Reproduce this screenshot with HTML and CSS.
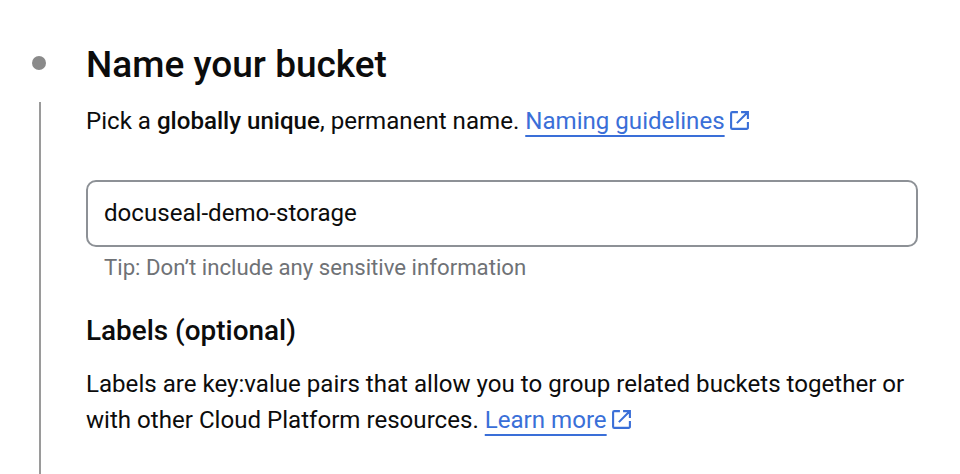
FILE: index.html
```html
<!DOCTYPE html>
<html lang="en">
<head>
    <meta charset="UTF-8">
    <title>Name your bucket</title>
    <link rel="stylesheet" href="styles.css">
</head>
<body>
    <div class="step">
        <div class="rail">
            <div class="rail-dot"></div>
            <div class="rail-line"></div>
        </div>
        <div class="step-content">
            <h1 class="step-title">Name your bucket</h1>
            <p class="intro">Pick a <strong>globally unique</strong>, permanent name. <a class="link" href="#">Naming guidelines</a><svg class="ext-icon" viewBox="0 0 20 20"><path d="M8.5 2H3.2A1.2 1.2 0 0 0 2 3.2v13.6A1.2 1.2 0 0 0 3.2 18h13.6a1.2 1.2 0 0 0 1.2-1.2v-5.3M7.5 12.5 18 2M11.5 2H18v6.5"/></svg></p>
            <div class="field">docuseal-demo-storage</div>
            <div class="hint">Tip: Don’t include any sensitive information</div>
            <h2 class="section-title">Labels (optional)</h2>
            <p class="body-text">Labels are key:value pairs that allow you to group related buckets together or with other Cloud Platform resources. <a class="link" href="#">Learn more</a><svg class="ext-icon" viewBox="0 0 20 20"><path d="M8.5 2H3.2A1.2 1.2 0 0 0 2 3.2v13.6A1.2 1.2 0 0 0 3.2 18h13.6a1.2 1.2 0 0 0 1.2-1.2v-5.3M7.5 12.5 18 2M11.5 2H18v6.5"/></svg></p>
        </div>
    </div>
</body>
</html>
```

FILE: styles.css
```css
html, body {
    margin: 0;
    height: 474px;
    overflow: hidden;
    background: #fff;
}
body {
    font-family: Roboto, "Liberation Sans", sans-serif;
    color: #0c0c0c;
}
.step {
    display: flex;
    height: 474px;
}
.rail {
    width: 86px;
    flex: none;
    display: flex;
    flex-direction: column;
    padding: 56px 0 0 32px;
    box-sizing: border-box;
}
.rail-dot {
    width: 14px;
    height: 14px;
    border-radius: 50%;
    background: #8a8a8a;
}
.rail-line {
    width: 2px;
    flex: 1;
    margin: 32px 0 0 7px;
    background: #9a9a9a;
}
.step-content {
    width: 832px;
    padding-top: 43px;
}
.step-title {
    margin: 0;
    font-size: 37px;
    line-height: 44px;
    font-weight: 500;
}
.intro {
    margin: 13px 0 0;
    font-size: 24.1px;
    line-height: 42px;
}
.intro strong {
    font-weight: 500;
}
.link {
    color: #3a6fd8;
    text-decoration: underline 2px;
    text-underline-offset: 6px;
    text-decoration-skip-ink: none;
}
.ext-icon {
    width: 21px;
    height: 21px;
    margin-left: 4px;
    vertical-align: -2px;
    fill: none;
    stroke: #3a6fd8;
    stroke-width: 2;
}
.field {
    margin-top: 38px;
    height: 63px;
    border: 2px solid #8d9196;
    border-radius: 10px;
    padding: 0 16px;
    font-size: 24.1px;
    line-height: 63px;
}
.hint {
    margin: 5px 0 0 18px;
    font-size: 22.2px;
    line-height: 30px;
    color: #6f7276;
}
.section-title {
    margin: 32px 0 0;
    font-size: 27.9px;
    line-height: 34px;
    font-weight: 500;
}
.body-text {
    margin: 18px 0 0;
    font-size: 24.1px;
    line-height: 36px;
}
```
